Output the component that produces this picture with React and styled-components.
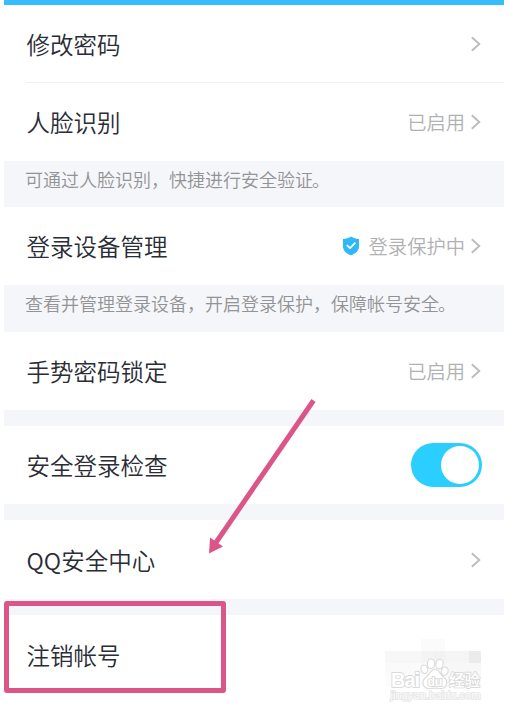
import styled, { createGlobalStyle } from 'styled-components';

const cyan = '#2fb9fa';
const pink = '#dc5588';
const panelGrey = '#f5f6fa';

const GlobalStyle = createGlobalStyle`
  body {
    margin: 0;
    background: white;
    font-family: "Noto Sans CJK SC", sans-serif;
  }
`;

const Screen = styled.div`
  position: relative;
  width: 500px;
  height: 714px;
  margin-left: 4px;
  overflow: hidden;
`;

const TopBar = styled.div`
  height: 5px;
  background: #37bdfc;
`;

const Row = styled.div`
  height: ${props => props.$height || 78}px;
  padding: 0 22px 0 22.5px;
  box-sizing: border-box;
  display: flex;
  align-items: center;
  justify-content: space-between;
`;

const Divider = styled.div`
  height: 1px;
  margin-left: 22px;
  background: #f1f1f3;
`;

const Title = styled.div`
  font-size: 23.5px;
  font-weight: 350;
  line-height: 34px;
  color: #2a2c36;
  white-space: nowrap;
`;

const Status = styled.div`
  display: flex;
  align-items: center;
  font-size: 19.3px;
  font-weight: 350;
  line-height: 28px;
  color: #b0b1b4;
  white-space: nowrap;

  .shield {
    margin-right: 9px;
  }

  .chevron {
    margin-left: 5px;
  }
`;

const Hint = styled.div`
  height: ${props => props.$height}px;
  padding: 5px 0 0 21px;
  box-sizing: border-box;
  font-size: 18px;
  font-weight: 350;
  line-height: 26px;
  color: #939395;
  background: ${panelGrey};
  white-space: nowrap;

  span {
    margin-left: -1px;
    margin-right: 1px;
  }
`;

const Gap = styled.div`
  height: 16px;
  background: ${panelGrey};
`;

const Toggle = styled.div`
  width: 71px;
  height: 44px;
  padding: 3px;
  box-sizing: border-box;
  display: flex;
  justify-content: flex-end;
  border-radius: 22px;
  background: #2bcfff;
`;

const Knob = styled.div`
  width: 38px;
  height: 38px;
  border-radius: 50%;
  background: white;
`;

const Highlight = styled.div`
  position: absolute;
  left: 0;
  top: 601px;
  width: 222px;
  height: 92px;
  box-sizing: border-box;
  border: 5px solid ${pink};
  border-radius: 3px;
`;

const Arrow = styled.svg`
  position: absolute;
  left: 196px;
  top: 390px;
`;

const Watermark = styled.svg`
  position: absolute;
  left: 366px;
  top: 630px;
`;

const Chevron = () => (
  <svg className="chevron" width="12" height="18" viewBox="0 0 12 18" fill="none">
    <path d="M1.8 2.2 L9.3 9 L1.8 15.8" stroke="#bcbcbe" strokeWidth="1.9" />
  </svg>
);

const Shield = () => (
  <svg className="shield" width="18" height="20" viewBox="0 0 18 20" fill="none">
    <path
      d="M9 0.6 C11.5 2.2 14 2.9 17 3 V10.2 C17 14.8 13.5 17.6 9 19.3 C4.5 17.6 1 14.8 1 10.2 V3 C4 2.9 6.5 2.2 9 0.6 Z"
      fill={cyan}
    />
    <path d="M4.8 9.1 L8 12.1 L13.4 6.7" stroke="white" strokeWidth="1.7" />
  </svg>
);

const mosaic = [
  [51, 9, 24, 12, '#fbfbfb'],
  [15, 21, 36, 12, '#f7f7f7'],
  [51, 21, 12, 12, '#f4f4f4'],
  [63, 21, 12, 12, '#f2f2f2'],
  [75, 21, 24, 12, '#f5f5f5'],
  [99, 21, 12, 12, '#ebebeb'],
  [15, 33, 48, 12, '#fafafa'],
  [63, 33, 48, 12, '#f7f7f7'],
  [15, 45, 96, 12, '#fcfcfc'],
];

const BaiduMark = () => (
  <Watermark width="130" height="84" viewBox="0 0 130 84">
    {mosaic.map(([x, y, width, height, fill]) => (
      <rect key={`${x}-${y}`} x={x} y={y} width={width} height={height} fill={fill} />
    ))}
    <g fill="white" stroke="#dcdcdc" strokeWidth="1.2">
      <ellipse cx="54.3" cy="39.3" rx="3.3" ry="4.3" transform="rotate(-14 54.3 39.3)" />
      <ellipse cx="61" cy="33.7" rx="3.6" ry="4.8" />
      <ellipse cx="69.5" cy="34" rx="3.6" ry="4.8" transform="rotate(10 69.5 34)" />
      <ellipse cx="74.7" cy="41.3" rx="3.3" ry="4.3" transform="rotate(16 74.7 41.3)" />
      <path d="M65 39.5 C60 39.5 60 44.5 56 47.3 C50.5 51.5 53 59 59.5 58.5 C63 58 67 58 70.5 58.5 C77 59 79 51.5 73.8 47.3 C69.5 44.5 70 39.5 65 39.5 Z" />
    </g>
    <g fill="white" stroke="#dadada" strokeWidth="1.8" paintOrder="stroke" fontWeight="700">
      <text x="21" y="57" fontFamily="Liberation Sans" fontSize="20" textLength="29">Bai</text>
      <text x="57.5" y="55.5" fontFamily="Liberation Sans" fontSize="12.5" textLength="15">du</text>
      <text x="79" y="56" fontFamily="Noto Sans CJK SC" fontWeight="500" fontSize="15.5" textLength="31">经验</text>
    </g>
    <text
      x="20.5"
      y="69"
      fill="#fcfcfc"
      stroke="#e4e4e4"
      strokeWidth="1.5"
      paintOrder="stroke"
      fontFamily="Liberation Sans"
      fontSize="10.5"
      textLength="90"
      lengthAdjust="spacingAndGlyphs"
    >
      jingyan.baidu.com
    </text>
  </Watermark>
);

export default () => (
  <>
    <GlobalStyle />
    <Screen>
      <TopBar />
      <Row $height={77}>
        <Title>修改密码</Title>
        <Status><Chevron /></Status>
      </Row>
      <Divider />
      <Row>
        <Title>人脸识别</Title>
        <Status>已启用<Chevron /></Status>
      </Row>
      <Hint $height={46}>可通过人脸识别，快捷进行安全验证<span>。</span></Hint>
      <Row>
        <Title>登录设备管理</Title>
        <Status><Shield />登录保护中<Chevron /></Status>
      </Row>
      <Hint $height={47}>查看并管理登录设备，开启登录保护，保障帐号安全<span>。</span></Hint>
      <Row>
        <Title>手势密码锁定</Title>
        <Status>已启用<Chevron /></Status>
      </Row>
      <Gap />
      <Row>
        <Title>安全登录检查</Title>
        <Toggle><Knob /></Toggle>
      </Row>
      <Gap />
      <Row $height={79}>
        <Title>QQ安全中心</Title>
        <Status><Chevron /></Status>
      </Row>
      <Gap />
      <Row $height={80}>
        <Title>注销帐号</Title>
      </Row>
      <BaiduMark />
      <Highlight />
      <Arrow width="130" height="170" viewBox="0 0 130 170">
        <path d="M117.5 10.5 L19 154" stroke={pink} strokeWidth="5" transform="translate(-4 0)" />
        <path d="M13 163.5 L14 147.5 L27 156.5 Z" fill={pink} transform="translate(-4 0)" />
      </Arrow>
    </Screen>
  </>
);
